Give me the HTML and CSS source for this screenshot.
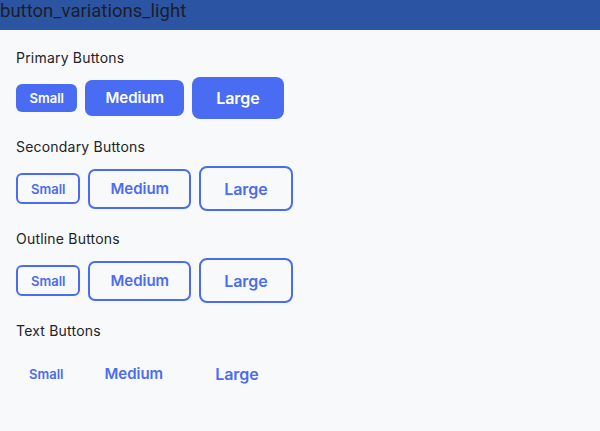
FILE: index.html
```html
<!DOCTYPE html>
<html>
<head>
<meta charset="utf-8">
<link rel="stylesheet" href="styles.css">
</head>
<body>
<header class="titlebar">button_variations_light</header>
<main class="content">
  <section class="group">
    <div class="label">Primary Buttons</div>
    <div class="row">
      <button class="btn primary sm">Small</button>
      <button class="btn primary md">Medium</button>
      <button class="btn primary lg">Large</button>
    </div>
  </section>
  <section class="group">
    <div class="label">Secondary Buttons</div>
    <div class="row">
      <button class="btn bordered sm">Small</button>
      <button class="btn bordered md">Medium</button>
      <button class="btn bordered lg">Large</button>
    </div>
  </section>
  <section class="group">
    <div class="label">Outline Buttons</div>
    <div class="row">
      <button class="btn bordered sm">Small</button>
      <button class="btn bordered md">Medium</button>
      <button class="btn bordered lg">Large</button>
    </div>
  </section>
  <section class="group">
    <div class="label">Text Buttons</div>
    <div class="row text-row">
      <button class="btn text sm">Small</button>
      <button class="btn text md">Medium</button>
      <button class="btn text lg">Large</button>
    </div>
  </section>
</main>
</body>
</html>
```
FILE: styles.css
```css
* { box-sizing: border-box; }
html, body { margin: 0; padding: 0; }
body {
  background: #f8f9fb;
  font-family: "Inter", "Noto Sans", sans-serif;
  width: 600px;
  height: 431px;
  overflow: hidden;
}
.titlebar {
  height: 30px;
  background: #2b55a3;
  color: #1b1d2a;
  font-family: "Roboto", "Noto Sans", sans-serif;
  font-size: 18.5px;
  line-height: 22px;
  padding: 0;
}
.content {
  padding: 18px 16px;
}
.group { margin-bottom: 18px; }
.label {
  font-family: "Inter", sans-serif;
  font-size: 14px;
  letter-spacing: 0.2px;
  line-height: 20px;
  color: #222326;
  margin-bottom: 9px;
}
.row {
  display: flex;
  align-items: center;
  gap: 8px;
}
.text-row { padding-top: 3px; }
.btn {
  font-family: "Inter", sans-serif;
  font-weight: 600;
  border: none;
  background: none;
  color: #4a6cf2;
  cursor: pointer;
}
.sm { font-size: 13px; line-height: 16px; padding: 6px 13px; border-radius: 6px; }
.md { font-size: 15px; line-height: 20px; padding: 8px 20px; border-radius: 7px; }
.lg { font-size: 16px; line-height: 22px; padding: 10px 24px; border-radius: 8px; }
.primary { background: #4a6cf2; color: #ffffff; }
.sm.primary { padding: 6px 13.5px; }
.bordered { border: 2px solid #4a6cf2; background: transparent; color: #4a6cf2; }
.sm.bordered { padding: 5.5px 13px; }
.md.bordered { padding: 8px 20px; }
.lg.bordered { padding: 9.5px 23px; }
.text { background: transparent; color: #4a6cf2; }
```
